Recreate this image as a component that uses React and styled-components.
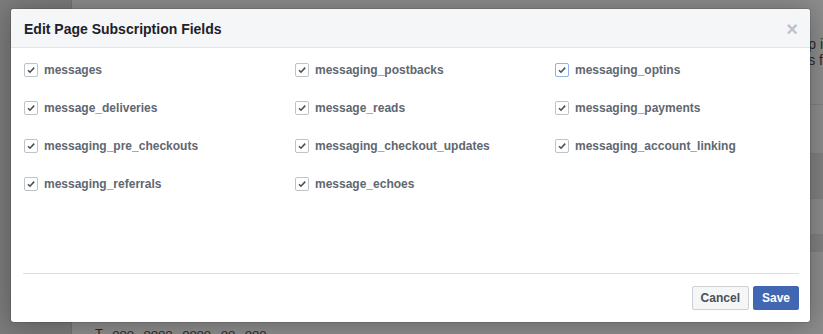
import styled, { createGlobalStyle } from "styled-components";

const GlobalStyle = createGlobalStyle`
  html, body {
    margin: 0;
    padding: 0;
    background: #8c8c8c;
    font-family: "Liberation Sans", Helvetica, Arial, sans-serif;
  }
`;

const Page = styled.div`
  position: relative;
  width: 823px;
  height: 334px;
  overflow: hidden;
  display: flex;
  background: #8c8c8c;
`;

const Sidebar = styled.div`
  width: 72px;
  background: #7b7b7b;
  border-right: 1px solid #727272;
`;

const Content = styled.div`
  flex: 1;
  display: flex;
  flex-direction: column;
  padding-left: 736px;
  padding-top: 36px;
  font-size: 14px;
  color: #2b2b2b;
  line-height: 16px;
`;

const BgText = styled.div`
  white-space: nowrap;
`;

const BgBand = styled.div`
  height: ${(p) => p.h}px;
  margin-top: ${(p) => p.mt}px;
  background: ${(p) => (p.dark ? "#808080" : "transparent")};
  border-top: 1px solid #7e7e7e;
`;

const BottomText = styled.div`
  position: absolute;
  left: 95px;
  top: 326px;
  font-size: 13px;
  color: #2b2b2b;
  white-space: nowrap;
  word-spacing: 6px;
`;

const Dialog = styled.div`
  position: absolute;
  left: 11px;
  top: 9px;
  width: 799px;
  height: 313px;
  background: #fff;
  border-radius: 3px;
  box-shadow: 0 2px 26px rgba(0, 0, 0, 0.3), 0 0 0 1px rgba(0, 0, 0, 0.1);
  display: flex;
  flex-direction: column;
  overflow: hidden;
`;

const Header = styled.div`
  height: 39px;
  background: #f5f6f7;
  border-bottom: 1px solid #e5e5e5;
  display: flex;
  align-items: center;
  justify-content: space-between;
  padding: 0 12px 0 13px;
  box-sizing: border-box;
`;

const Title = styled.h2`
  margin: 0;
  font-size: 14px;
  font-weight: bold;
  color: #1d2129;
  padding-top: 1px;
`;

const Close = styled.span`
  font-size: 20px;
  color: #bec2c9;
  line-height: 1;
  font-weight: bold;
  margin-top: 2px;
`;

const Body = styled.div`
  flex: 1;
  padding: 14px 12px 0 13px;
  display: grid;
  grid-template-columns: 271px 260px 1fr;
  grid-auto-rows: 38px;
  align-content: start;
`;

const Field = styled.label`
  display: flex;
  align-items: center;
  gap: 6px;
  height: 16px;
  font-size: 12px;
  font-weight: bold;
  color: #606770;
`;

const Box = styled.span`
  width: 12px;
  height: 12px;
  border: 1px solid ${(p) => (p.focus ? "#8fb1ec" : "#bec3c9")};
  border-radius: 2px;
  background: #fff;
  display: flex;
  align-items: center;
  justify-content: center;
  flex-shrink: 0;
`;

const Footer = styled.div`
  margin: 0 11px 0 12px;
  border-top: 1px solid #dddfe2;
  height: 49px;
  display: flex;
  justify-content: flex-end;
  align-items: center;
  gap: 4px;
  padding-bottom: 1px;
  box-sizing: border-box;
`;

const Button = styled.button`
  height: 24px;
  padding: 0 8px;
  border-radius: 2px;
  font-family: inherit;
  font-size: 12px;
  font-weight: bold;
  border: 1px solid ${(p) => (p.primary ? "#4267b2" : "#ccd0d5")};
  background: ${(p) => (p.primary ? "#4267b2" : "#f5f6f7")};
  color: ${(p) => (p.primary ? "#fff" : "#4b4f56")};
`;

const fields = [
  "messages",
  "messaging_postbacks",
  "messaging_optins",
  "message_deliveries",
  "message_reads",
  "messaging_payments",
  "messaging_pre_checkouts",
  "messaging_checkout_updates",
  "messaging_account_linking",
  "messaging_referrals",
  "message_echoes",
];

function Check({ focus }) {
  return (
    <Box focus={focus}>
      <svg width="10" height="10" viewBox="0 0 10 10">
        <path
          d="M2 5.2 L4 7.2 L8.2 2.6"
          fill="none"
          stroke="#4b4f56"
          strokeWidth="1.6"
        />
      </svg>
    </Box>
  );
}

export default function App() {
  return (
    <>
      <GlobalStyle />
      <Page>
        <Sidebar />
        <Content>
          <BgText>p i</BgText>
          <BgText>s f</BgText>
          <BgBand mt={36} h={48} />
          <BgBand mt={0} h={44} dark />
          <BgBand mt={0} h={35} />
          <BgBand mt={0} h={16} dark />
          <BgBand mt={0} h={48} />
        </Content>
        <BottomText>T ooo oooo oooo oo ooo</BottomText>
        <Dialog>
          <Header>
            <Title>Edit Page Subscription Fields</Title>
            <Close>×</Close>
          </Header>
          <Body>
            {fields.map((f, i) => (
              <Field key={f}>
                <Check focus={i === 2} />
                {f}
              </Field>
            ))}
          </Body>
          <Footer>
            <Button>Cancel</Button>
            <Button primary>Save</Button>
          </Footer>
        </Dialog>
      </Page>
    </>
  );
}
